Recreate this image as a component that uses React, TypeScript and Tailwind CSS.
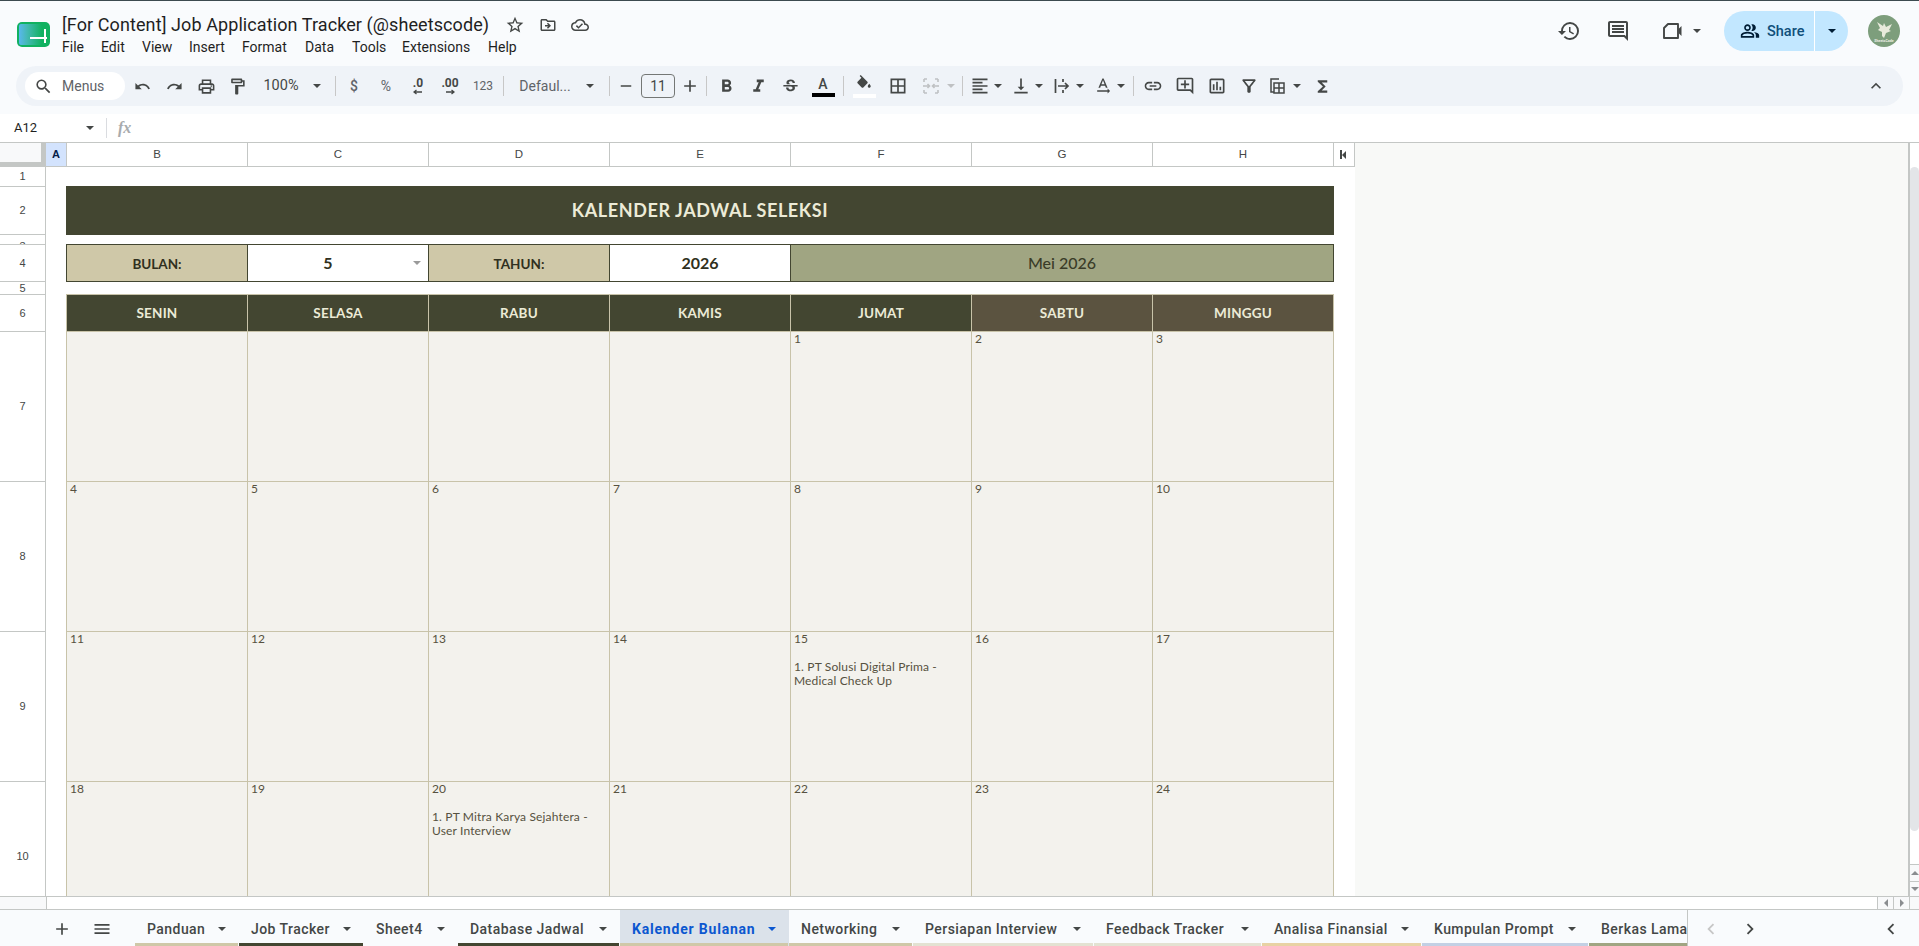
import React from "react";
import {
  MdUndo, MdRedo, MdOutlinePrint, MdOutlineFormatPaint, MdAdd, MdRemove, MdFormatBold, MdFormatItalic,
  MdStrikethroughS, MdBorderAll, MdFormatAlignLeft, MdVerticalAlignBottom,
  MdTextRotationNone, MdLink, MdOutlineAddComment, MdOutlineInsertChart, MdOutlineFilterAlt, MdFunctions,
  MdHistory, MdOutlineComment, MdOutlinePeopleAlt, MdStarBorder, MdOutlineDriveFileMove, MdOutlineCloudDone,
  MdMenu, MdExpandLess, MdChevronLeft, MdChevronRight, MdSearch,
} from "react-icons/md";

const G = "#444746";

const Caret = ({ className = "border-t-[#444746]" }: { className?: string }) => (
  <span className={`block shrink-0 w-0 h-0 border-x-[4px] border-x-transparent border-t-[4px] ${className}`} />
);

const Slot = ({ w = 32, children }: { w?: number; children?: React.ReactNode }) => (
  <div className="flex items-center justify-center shrink-0 h-full" style={{ width: w }}>
    {children}
  </div>
);

const Div = () => <div className="w-px h-5 bg-[#c7c7c7] shrink-0" />;

const Logo = () => (
  <svg width="33" height="25" viewBox="0 0 33 25" className="shrink-0">
    <defs>
      <linearGradient id="lg" x1="0" x2="1" y1="0" y2="0">
        <stop offset="0" stopColor="#59b7ee" />
        <stop offset="0.35" stopColor="#44b9b4" />
        <stop offset="1" stopColor="#11b160" />
      </linearGradient>
    </defs>
    <rect width="33" height="25" rx="5" fill="#11b160" />
    <rect x="2" y="2" width="23" height="21" rx="2" fill="url(#lg)" />
    <rect x="13" y="15" width="17" height="2" fill="#fff" />
    <rect x="27" y="7" width="2" height="14" fill="#fff" />
  </svg>
);

const Avatar = () => (
  <svg width="32" height="32" viewBox="0 0 32 32" className="shrink-0">
    <circle cx="16" cy="16" r="16" fill="#7d9e7c" />
    <path d="M9 7l6 4 1-3 2 4 6-3-3 6 2 1-5 2-2 5-2-2v-4l-4-2 2-2z" fill="#e8eadb" />
    <text x="16" y="27" textAnchor="middle" fontSize="3.6" fontWeight="700" fill="#eef0e4" fontFamily="Roboto, sans-serif">SheetsCode</text>
  </svg>
);

const FillIcon = () => (
  <svg width="18" height="18" viewBox="0 0 24 24" fill={G}>
    <path d="M16.56 8.94L7.62 0 6.21 1.41l2.38 2.38-5.15 5.15c-.59.59-.59 1.54 0 2.12l5.5 5.5c.29.29.68.44 1.06.44s.77-.15 1.06-.44l5.5-5.5c.59-.58.59-1.53 0-2.12zM19 11.5s-2 2.17-2 3.5c0 1.1.9 2 2 2s2-.9 2-2c0-1.33-2-3.5-2-3.5z" />
  </svg>
);

const MergeIcon = () => (
  <svg width="18" height="18" viewBox="0 0 18 18" fill="none" stroke="#bfc1c3" strokeWidth="1.6">
    <path d="M2 2h3M2 2v3M16 2h-3M16 2v3M2 16h3M2 16v-3M16 16h-3M16 16v-3M2 8v2M16 8v2" />
    <path d="M3 9h4M5.5 7L7.5 9l-2 2M15 9h-4M12.5 7L10.5 9l2 2" />
  </svg>
);

const OverflowIcon = () => (
  <svg width="18" height="18" viewBox="0 0 18 18" fill="none" stroke={G} strokeWidth="1.7">
    <path d="M2.5 2v14M10 2v3M10 13v3" />
    <path d="M5 9h10M12 6l3 3-3 3" />
  </svg>
);

const TableIcon = () => (
  <svg width="18" height="18" viewBox="0 0 18 18" fill="none" stroke={G} strokeWidth="1.5">
    <path d="M11 2H3v13h3" />
    <rect x="6" y="6" width="10" height="10" />
    <path d="M6 11h10M11 6v10" />
  </svg>
);

const VideoIcon = () => (
  <svg width="22" height="18" viewBox="0 0 22 18">
    <path d="M6 2h10v14H2V6z" fill="none" stroke={G} strokeWidth="1.9" strokeLinejoin="round" />
    <path d="M16.5 7l3-3v10l-3-3z" fill={G} />
  </svg>
);

const DecIcon = ({ text, right }: { text: string; right?: boolean }) => (
  <span className="flex flex-col items-center text-[12px] font-bold leading-[11px] text-[#444746]">
    <span>{text}</span>
    <svg width="10" height="6" viewBox="0 0 10 6" fill="none" stroke={G} strokeWidth="1.3">
      {right ? <path d="M1 3h8M6.5 1L9 3 6.5 5" /> : <path d="M9 3H1M3.5 1L1 3l2.5 2" />}
    </svg>
  </span>
);

const menus = ["File", "Edit", "View", "Insert", "Format", "Data", "Tools", "Extensions", "Help"];
const menuW = [39, 41, 47, 53, 63, 47, 50, 86, 32];

const Header = () => (
  <div className="h-[114px] bg-[#f9fbfd] border-t border-[#3c4a4f] flex flex-col shrink-0">
    <div className="h-[65px] flex shrink-0">
      <div className="pl-[17px] pt-[21px] w-[61px] shrink-0"><Logo /></div>
      <div className="flex flex-col">
        <div className="flex items-center h-[17px] mt-[15px]">
          <span className="ml-px text-[18px] leading-[17px] tracking-[0.09px] text-[#1f1f1f] whitespace-nowrap w-[443px]">[For Content] Job Application Tracker (@sheetscode)</span>
          <MdStarBorder size={20} color={G} className="shrink-0" />
          <MdOutlineDriveFileMove size={18} color={G} className="ml-[14px] shrink-0" />
          <MdOutlineCloudDone size={18} color={G} className="ml-[14px] shrink-0" />
        </div>
        <div className="flex h-[16px] mt-[6px] ml-px text-[14px] leading-[16px] text-[#1f1f1f]">
          {menus.map((m, i) => (
            <span key={m} className="shrink-0" style={{ width: menuW[i] }}>{m}</span>
          ))}
        </div>
      </div>
      <div className="flex-1" />
      <div className="flex items-center h-[40px] mt-[10px] pr-[19px]">
        <MdHistory size={24} color={G} className="shrink-0" />
        <MdOutlineComment size={24} color={G} className="ml-[25px] shrink-0" />
        <div className="ml-[31px] w-[24px] flex justify-center"><VideoIcon /></div>
        <div className="ml-[7px] w-[10px] flex justify-center"><Caret /></div>
        <div className="flex items-center h-[40px] ml-[22px] w-[124px] rounded-full bg-[#c2e7ff] overflow-hidden">
          <div className="flex items-center h-full w-[91px] pl-[16px] gap-[7px] border-r border-white">
            <MdOutlinePeopleAlt size={20} color="#001d35" className="shrink-0" />
            <span className="text-[14.5px] font-medium text-[#0f4f7a] pt-px">Share</span>
          </div>
          <div className="flex-1 flex items-center justify-center"><Caret className="border-t-[#001d35]" /></div>
        </div>
        <div className="ml-[20px]"><Avatar /></div>
      </div>
    </div>
    <div className="h-[40px] mx-[16px] rounded-[20px] bg-[#eff3f8] flex items-center text-[#444746]">
      <div className="ml-[9px] w-[100px] h-[28px] rounded-full bg-white flex items-center pl-[9px] gap-[9px] shrink-0">
        <MdSearch size={19} color={G} className="shrink-0" />
        <span className="text-[14px] text-[#5f6368]">Menus</span>
      </div>
      <div className="flex items-center h-full ml-[1px]">
        <Slot><MdUndo size={17} color={G} /></Slot>
        <Slot><MdRedo size={17} color={G} /></Slot>
        <Slot><MdOutlinePrint size={19} color={G} /></Slot>
        <Slot w={30}><MdOutlineFormatPaint size={19} color={G} /></Slot>
        <Slot w={58}><span className="text-[14.5px]">100%</span></Slot>
        <Slot w={14}><Caret /></Slot>
        <Slot w={6} />
        <Slot w={10}><Div /></Slot>
        <Slot w={28}><span className="text-[14px] font-medium text-[#5f6368]">$</span></Slot>
        <Slot w={36}><span className="text-[14px] text-[#5f6368]">%</span></Slot>
        <Slot w={28}><DecIcon text=".0" /></Slot>
        <Slot w={36}><DecIcon text=".00" right /></Slot>
        <Slot w={30}><span className="text-[12px] text-[#5f6368]">123</span></Slot>
        <Slot w={10}><Div /></Slot>
        <Slot w={74}><span className="text-[14px] text-[#5f6368]">Defaul...</span></Slot>
        <Slot w={16}><Caret /></Slot>
        <Slot w={6} />
        <Slot w={10}><Div /></Slot>
        <Slot w={24}><MdRemove size={18} color={G} /></Slot>
        <div className="w-[34px] h-[24px] ml-[3px] rounded-[4px] border border-[#747775] flex items-center justify-center text-[14px] text-[#444746] shrink-0">11</div>
        <Slot w={30}><MdAdd size={20} color={G} /></Slot>
        <Slot w={2}><Div /></Slot>
        <Slot w={38}><MdFormatBold size={21} color={G} /></Slot>
        <Slot w={26}><MdFormatItalic size={21} color={G} /></Slot>
        <Slot w={38}><MdStrikethroughS size={19} color={G} /></Slot>
        <Slot w={28}>
          <span className="flex flex-col items-center text-[14px] font-medium leading-[14px] pt-[1px]">A<span className="block w-[23px] h-[4px] bg-black mt-[2px]" /></span>
        </Slot>
        <Slot w={12}><Div /></Slot>
        <Slot w={30}>
          <span className="flex flex-col items-center"><FillIcon /><span className="block w-[23px] h-[4px] bg-white mt-[1px]" /></span>
        </Slot>
        <Slot w={38}><MdBorderAll size={20} color={G} /></Slot>
        <Slot w={28}><MergeIcon /></Slot>
        <Slot w={12}><Caret className="border-t-[#bfc1c3]" /></Slot>
        <Slot w={10}><Div /></Slot>
        <Slot w={26}><MdFormatAlignLeft size={20} color={G} /></Slot>
        <Slot w={10}><Caret /></Slot>
        <Slot w={6} />
        <Slot w={24}><MdVerticalAlignBottom size={20} color={G} /></Slot>
        <Slot w={1} />
        <Slot w={10}><Caret /></Slot>
        <Slot w={6} />
        <Slot w={24}><OverflowIcon /></Slot>
        <Slot w={1} />
        <Slot w={10}><Caret /></Slot>
        <Slot w={6} />
        <Slot w={24}><MdTextRotationNone size={20} color={G} /></Slot>
        <Slot w={1} />
        <Slot w={10}><Caret /></Slot>
        <Slot w={14}><Div /></Slot>
        <Slot w={26}><MdLink size={20} color={G} /></Slot>
        <Slot w={38}><MdOutlineAddComment size={20} color={G} /></Slot>
        <Slot w={26}><MdOutlineInsertChart size={20} color={G} /></Slot>
        <Slot w={38}><MdOutlineFilterAlt size={20} color={G} /></Slot>
        <Slot w={18}><TableIcon /></Slot>
        <Slot w={6} />
        <Slot w={10}><Caret /></Slot>
        <Slot w={40}><MdFunctions size={19} color={G} /></Slot>
      </div>
      <div className="flex-1" />
      <MdExpandLess size={20} color={G} className="mr-[17px] shrink-0" />
    </div>
  </div>
);

const FormulaBar = () => (
  <div className="h-[28px] flex items-center bg-white shrink-0">
    <span className="ml-[14px] w-[72px] text-[13px] text-[#1f1f1f]">A12</span>
    <Caret />
    <div className="ml-[12px] w-px h-5 bg-[#dadce0]" />
    <span className="ml-[11px] text-[16px] italic font-bold text-[#a8abad] font-['Liberation_Serif',serif]">fx</span>
  </div>
);

const cols = ["B", "C", "D", "E", "F", "G", "H"];

const arial = "font-['Liberation_Sans',sans-serif]";

const RowHead = ({ n, clip }: { n: string; clip?: boolean }) => (
  <div className={`col-start-1 border-r border-b border-[#c4c7c5] flex justify-center text-[11px] text-[#444746] overflow-hidden bg-white ${arial} ${clip ? "items-start pt-[3px]" : "items-center"}`}>
    {n}
  </div>
);

const font = "font-['Lato','Noto_Sans',sans-serif]";

const Day = ({ v }: { v?: string }) => (
  <div className={`border-r border-b border-[#c8c3a9] bg-[#f3f2ed] pl-[3px] text-[12px] tracking-[0.15px] leading-[14px] text-[#565140] whitespace-pre-wrap overflow-hidden ${font}`}>
    {v}
  </div>
);

const weeks: (string | undefined)[][] = [
  [undefined, undefined, undefined, undefined, "1", "2", "3"],
  ["4", "5", "6", "7", "8", "9", "10"],
  ["11", "12", "13", "14", "15\n\n1. PT Solusi Digital Prima -\nMedical Check Up", "16", "17"],
  ["18", "19", "20\n\n1. PT Mitra Karya Sejahtera -\nUser Interview", "21", "22", "23", "24"],
];

const labelCls = `bg-[#cfc8a8] border-y border-r border-[#434631] -mt-px flex items-center justify-center text-[13.5px] font-bold text-[#2f3020] pt-[2px] ${font}`;
const valueCls = `bg-white border-y border-r border-[#434631] -mt-px flex items-center justify-center text-[16px] font-bold text-[#2f3020] ${font}`;
const dayHeadCls = `border-y border-r border-[#c8c3a9] -mt-px flex items-center justify-center text-[13.5px] tracking-[0.2px] font-bold text-[#ecebd7] ${font}`;

const Sheet = () => (
  <div className="h-[754px] shrink-0 flex bg-[#f8f9f7] overflow-hidden border-t border-[#c4c7c5]">
    <div className="w-[1355px] shrink-0 bg-white overflow-hidden">
      <div className="grid grid-cols-[46px_21px_repeat(7,181px)_21px] grid-rows-[24px_20px_48px_10px_37px_13px_37px_150px_150px_150px_150px]">
        <div className="bg-[#f8f9fa] border-r-[5px] border-b-[5px] border-r-[#c4c7c5] border-b-[#c4c7c5]" />
        <div className={`bg-[#d3e3fd] border-b border-r border-[#c4c7c5] flex items-center justify-center text-[11px] font-bold text-[#041e49] ${arial}`}>A</div>
        {cols.map((c) => (
          <div key={c} className={`border-b border-r border-[#c4c7c5] flex items-center justify-center text-[11.5px] text-[#444746] ${arial}`}>{c}</div>
        ))}
        <div className="border-b border-r border-[#c4c7c5] flex items-center justify-center">
          <span className="block w-[2px] h-[9px] bg-[#444746]" /><Caret className="rotate-90 border-t-[#444746] -ml-[2px]" />
        </div>

        <RowHead n="1" />
        <div className="col-span-9" />

        <RowHead n="2" />
        <div />
        <div className={`col-span-7 -ml-px -mt-px bg-[#434631] flex items-center justify-center text-[18px] tracking-[0.6px] font-bold text-[#ecebd7] ${font}`}>KALENDER JADWAL SELEKSI</div>
        <div />

        <RowHead n="3" clip />
        <div className="col-span-9" />

        <RowHead n="4" />
        <div />
        <div className={`${labelCls} -ml-px border-l`}>BULAN:</div>
        <div className={`relative pr-[20px] ${valueCls}`}>
          5
          <span className="absolute right-[7px] inset-y-0 flex items-center"><Caret className="border-t-[#9a9a9a]" /></span>
        </div>
        <div className={labelCls}>TAHUN:</div>
        <div className={valueCls}>2026</div>
        <div className={`col-span-3 bg-[#a0a582] border-y border-r border-[#434631] -mt-px flex items-center justify-center text-[16px] font-medium text-[#3a3c28] ${font}`}>Mei 2026</div>
        <div />

        <RowHead n="5" />
        <div className="col-span-9" />

        <RowHead n="6" />
        <div />
        {["SENIN", "SELASA", "RABU", "KAMIS", "JUMAT"].map((d, i) => (
          <div key={d} className={`bg-[#434631] ${dayHeadCls} ${i === 0 ? "-ml-px border-l" : ""}`}>{d}</div>
        ))}
        {["SABTU", "MINGGU"].map((d) => (
          <div key={d} className={`bg-[#5b5340] ${dayHeadCls}`}>{d}</div>
        ))}
        <div />

        {weeks.map((w, i) => (
          <React.Fragment key={i}>
            <RowHead n={String(7 + i)} />
            <div className="border-r border-[#c8c3a9]" />
            {w.map((v, j) => (
              <Day key={j} v={v} />
            ))}
            <div />
          </React.Fragment>
        ))}
      </div>
    </div>
    <div className="flex-1" />
    <div className="w-[11px] shrink-0 bg-white border-l-2 border-[#c4c7c5] flex flex-col">
      <div className="h-[24px] shrink-0" />
      <div className="h-[664px] rounded-[5px] bg-[#e3e5e8] shrink-0" />
      <div className="flex-1" />
      <div className="h-[17px] shrink-0 border-t border-[#c4c7c5] bg-[#f8f9fa] flex items-center justify-center"><Caret className="rotate-180 border-t-[#8a8d90]" /></div>
      <div className="h-[15px] shrink-0 border-t border-[#c4c7c5] bg-[#f8f9fa] flex items-center justify-center"><Caret className="border-t-[#8a8d90]" /></div>
    </div>
  </div>
);

const HScroll = () => (
  <div className="h-[14px] shrink-0 flex bg-white border-y border-[#c4c7c5]">
    <div className="w-[47px] bg-[#f8f9fa] border-r border-[#c4c7c5]" />
    <div className="flex-1" />
    <div className="w-[16px] bg-[#f8f9fa] border-l border-[#c4c7c5] flex items-center justify-center"><Caret className="rotate-90 border-t-[#8a8d90]" /></div>
    <div className="w-[16px] bg-[#f8f9fa] border-l border-[#c4c7c5] flex items-center justify-center"><Caret className="-rotate-90 border-t-[#8a8d90]" /></div>
    <div className="w-[10px] bg-[#f8f9fa] border-l border-[#c4c7c5]" />
  </div>
);

const tabs: { name: string; w: number; c: string; active?: boolean }[] = [
  { name: "Panduan", w: 104, c: "#cfc8a8" },
  { name: "Job Tracker", w: 125, c: "#434631" },
  { name: "Sheet4", w: 94, c: "transparent" },
  { name: "Database Jadwal", w: 162, c: "#434631" },
  { name: "Kalender Bulanan", w: 169, c: "#cfc8a8", active: true },
  { name: "Networking", w: 124, c: "#cfc8a8" },
  { name: "Persiapan Interview", w: 181, c: "#e3e2d2" },
  { name: "Feedback Tracker", w: 168, c: "#e3e2d2" },
  { name: "Analisa Finansial", w: 160, c: "#e8d2a4" },
  { name: "Kumpulan Prompt", w: 167, c: "#c3d0e4" },
];

const TabBar = () => (
  <div className="h-[36px] shrink-0 flex bg-[#f9fbfd] overflow-hidden">
    <div className="w-[135px] shrink-0 flex items-center pt-[2px] pl-[52px] gap-[20px]">
      <MdAdd size={20} color={G} className="shrink-0" />
      <MdMenu size={20} color={G} className="shrink-0" />
    </div>
    {tabs.map((t) => (
      <div key={t.name} className={`shrink-0 flex flex-col ${t.active ? "bg-[#dbe2ea]" : ""}`} style={{ width: t.w }}>
        <div className={`flex-1 flex items-center justify-between pt-[5px] pl-[12px] pr-[13px] text-[14px] whitespace-nowrap ${t.active ? "text-[#0b57d0] font-bold tracking-[0.8px]" : "text-[#444746] font-medium tracking-[0.45px]"}`}>
          {t.name}
          <Caret className={t.active ? "border-t-[#0b57d0]" : "border-t-[#444746]"} />
        </div>
        <div className="h-[3px] mr-px" style={{ backgroundColor: t.c }} />
      </div>
    ))}
    <div className="w-[99px] shrink-0 flex flex-col border-r border-[#c4c7c5] overflow-hidden">
      <div className="flex-1 flex items-center pt-[5px] pl-[12px] text-[14px] font-medium tracking-[0.45px] whitespace-nowrap text-[#444746]">Berkas Lama</div>
      <div className="h-[3px] bg-[#a0a582]" />
    </div>
    <div className="flex items-center pt-[2px] pl-[12px]">
      <MdChevronLeft size={22} color="#c7c7c7" />
      <MdChevronRight size={22} color={G} className="ml-[17px]" />
    </div>
    <div className="flex-1" />
    <div className="flex items-center pt-[2px] pr-[17px]"><MdChevronLeft size={22} color={G} /></div>
  </div>
);

export default function App() {
  return (
    <div className="w-[1919px] h-[946px] flex flex-col overflow-hidden bg-white font-['Roboto',sans-serif]">
      <Header />
      <FormulaBar />
      <Sheet />
      <HScroll />
      <TabBar />
    </div>
  );
}
